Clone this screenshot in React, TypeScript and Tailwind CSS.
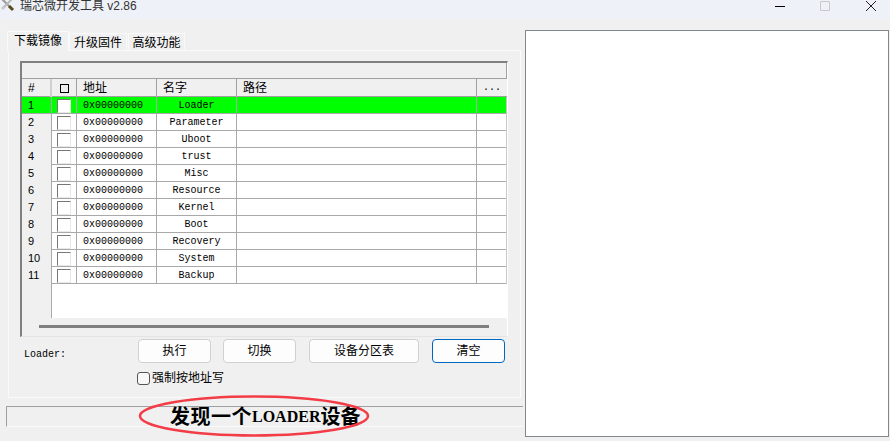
import React from "react";

const rows = ["Loader", "Parameter", "Uboot", "trust", "Misc", "Resource", "Kernel", "Boot", "Recovery", "System", "Backup"];
const cols = "grid grid-cols-[30px_25px_80px_80px_240px_30px]";
const cjk = "font-['Liberation_Sans','Noto_Sans_CJK_SC',sans-serif]";
const mono = "font-['Liberation_Mono','Noto_Sans_CJK_SC',monospace]";

const ToolIcon = () => (
  <svg width="14" height="14" viewBox="0 0 14 14" className="-mt-[2px] shrink-0">
    <path d="M1 1 L11 11" stroke="#9a9a9a" strokeWidth="2" />
    <path d="M8 8 L12 12" stroke="#5b4a1c" strokeWidth="3" />
    <path d="M11 1 L3 9" stroke="#b8b8b8" strokeWidth="2" />
    <path d="M4 8 L1 11" stroke="#c9c9c9" strokeWidth="3" />
  </svg>
);

const Tab = ({ label, active }: { label: string; active?: boolean }) => (
  <div
    className={
      active
        ? "relative z-10 flex h-[20px] w-[62px] -mb-px items-center justify-center border border-b-0 border-[#fafafa] bg-[#f0f0f0] pb-[2px] text-[12px] text-black"
        : "flex h-[17px] items-center justify-center border border-b-0 border-[#f9f9f9] bg-[#f0f0f0] pt-px text-[12px] text-black"
    }
  >
    {label}
  </div>
);

const Btn = ({ label, w, primary }: { label: string; w: string; primary?: boolean }) => (
  <button
    className={`flex h-[24px] ${w} items-center justify-center rounded-[4px] border bg-[#fdfdfd] text-[12px] text-black ${
      primary ? "border-[#0067c0]" : "border-[#d0d0d0]"
    }`}
  >
    {label}
  </button>
);

export default function App() {
  return (
    <div className={`relative flex h-[441px] w-[890px] flex-col overflow-hidden bg-[#f0f0f0] ${cjk}`}>
      {/* title bar */}
      <div className="flex h-[19px] items-start bg-[#eef2f8]">
        <div className="flex items-start pl-[1px]">
          <ToolIcon />
          <span className="ml-[5px] text-[12px] leading-[12px] text-[#333]">瑞芯微开发工具 v2.86</span>
        </div>
        <div className="ml-auto flex items-start">
          <div className="mt-[6px] h-px w-[10px] bg-black" />
          <div className="ml-[35px] mt-px h-[10px] w-[10px] rounded-[1px] border border-[#c8c8c8]" />
          <svg width="10" height="10" viewBox="0 0 10 10" className="ml-[36px] mr-[14px] mt-px">
            <path d="M0 0 L10 10 M10 0 L0 10" stroke="#222" strokeWidth="1" />
          </svg>
        </div>
      </div>

      <div className="flex flex-1">
        {/* left column */}
        <div className="flex w-[525px] flex-col pl-[6px]">
          <div className="ml-px mt-[12px] flex items-end">
            <Tab label="下载镜像" active />
            <div className="w-[58px]"><Tab label="升级固件" /></div>
            <div className="ml-px w-[57px]"><Tab label="高级功能" /></div>
          </div>

          <div className="ml-[2px] flex h-[348px] w-[513px] flex-col border border-[#fafafa] px-[11px] pt-[10px]">
            {/* table */}
            <div className="h-[276px] w-[488px] border-l-2 border-t-2 border-r border-b border-l-[#808080] border-t-[#808080] border-r-white border-b-[#e4e4e4]">
              <div className="h-[16px] w-[485px] border-b border-r border-[#a0a0a0] bg-[#f0f0f0]" />
              <div className={`${cols} h-[18px] border-b border-[#a0a0a0] text-[12px] leading-[18px] text-black`}>
                <div className="border-r-2 border-[#d0d0d0] pl-[6px]">#</div>
                <div className="flex items-center justify-center border-r border-[#a0a0a0]">
                  <div className="h-[9px] w-[9px] border border-black" />
                </div>
                <div className="border-r border-[#a0a0a0] pl-[6px]">地址</div>
                <div className="border-r border-[#a0a0a0] pl-[6px]">名字</div>
                <div className="border-r border-[#a0a0a0] pl-[6px]">路径</div>
                <div className={`${mono} text-center text-[10px] leading-[18px]`}>...</div>
              </div>
              {rows.map((name, i) => (
                <div
                  key={name}
                  className={`${cols} h-[17px] border-b border-[#a9a9a9] text-[10px] leading-[17px] text-black ${mono} ${
                    i === 0 ? "bg-[#00ff00]" : "bg-white"
                  }`}
                >
                  <div className={`${cjk} border-r border-[#a9a9a9] pl-[6px] text-[11px] ${i === 0 ? "" : "bg-[#f0f0f0]"}`}>
                    {i + 1}
                  </div>
                  <div className="flex items-center justify-center border-r border-[#a9a9a9]">
                    <div className="h-[14px] w-[14px] border border-t-[#777] border-l-[#777] border-r-[#e8e8e8] border-b-[#e8e8e8] bg-white" />
                  </div>
                  <div className="border-r border-[#a9a9a9] pl-[6px]">0x00000000</div>
                  <div className="border-r border-[#a9a9a9] text-center">{name}</div>
                  <div className="border-r border-[#a9a9a9]" />
                  <div className="w-[30px] border-r border-[#c8c8c8]" />
                </div>
              ))}
              <div className="flex h-[34px]">
                <div className="w-[30px] border-r border-[#a9a9a9] bg-[#f0f0f0]" />
                <div className="flex-1 bg-white" />
              </div>
              <div className="flex h-[17px] items-center bg-[#f0f0f0] pl-[17px]">
                <div className="h-[3px] w-[450px] bg-[#808080]" />
              </div>
            </div>

            {/* action row */}
            <div className="mt-[2px] flex items-start">
              <span className={`${mono} ml-[4px] mt-[9px] w-[114px] text-[10px] leading-[14px] text-black`}>Loader:</span>
              <Btn label="执行" w="w-[73px]" />
              <div className="w-[12px]" />
              <Btn label="切换" w="w-[73px]" />
              <div className="w-[13px]" />
              <Btn label="设备分区表" w="w-[110px]" />
              <div className="w-[13px]" />
              <Btn label="清空" w="w-[73px]" primary />
            </div>
            <div className="ml-[117px] mt-[8px] flex items-center">
              <div className="h-[13px] w-[13px] rounded-[3px] border border-[#555] bg-[#f8f8f8]" />
              <span className="ml-[2px] text-[12px] leading-[14px] text-black">强制按地址写</span>
            </div>
          </div>

          <div className="mt-[8px] flex h-[21px] w-[517px] items-center border-l border-t border-b border-l-[#a0a0a0] border-t-[#a0a0a0] border-b-[#fafafa] pl-[163px] font-['Liberation_Serif','Noto_Sans_CJK_SC',serif] text-[20px] font-bold leading-[20px] text-black">
            <span className="tracking-[0.5px]">发现一个</span>
            <span className="text-[16px]">LOADER</span>
            <span>设备</span>
          </div>
        </div>

        {/* preview panel */}
        <div className="mb-[4px] mr-[1px] mt-[11px] flex-1 border border-[#82878b] bg-white" />
      </div>

      {/* red annotation */}
      <svg width="234" height="44" viewBox="0 0 234 44" className="absolute left-[137px] top-[394px]">
        <ellipse cx="117" cy="22" rx="114" ry="19.5" fill="none" stroke="#f23c46" strokeWidth="2.5" />
      </svg>
    </div>
  );
}
